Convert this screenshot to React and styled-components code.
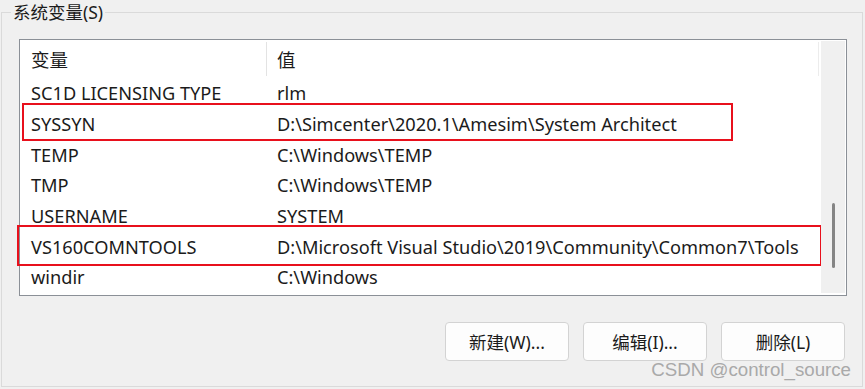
import React from "react";
import styled, { createGlobalStyle } from "styled-components";

const Global = createGlobalStyle`
  html, body { margin: 0; padding: 0; background: #f0f0f0; }
  body { width: 865px; height: 389px; overflow: hidden; }
  #root { width: 865px; height: 389px; }
`;

const FONT = `"Noto Sans", "Noto Sans CJK SC", sans-serif`;

const Page = styled.div`
  position: relative;
  width: 865px;
  height: 389px;
  box-sizing: border-box;
  padding: 2px 2px 2px 1px;
  background: #f0f0f0;
  font-family: ${FONT};
  color: #1b1b1b;
`;

const Group = styled.fieldset`
  margin: 0;
  box-sizing: border-box;
  height: 385px;
  border: 1px solid #dadada;
  padding: 0 16px 0 17px;
  display: flex;
  flex-direction: column;
  min-width: 0;
`;

const Legend = styled.legend`
  margin-left: -8px;
  padding: 0 2px;
  font-size: 17.5px;
  line-height: 20px;
  color: #1b1b1b;
`;

const ListBox = styled.div`
  margin-top: 17px;
  width: 828px;
  height: 257px;
  box-sizing: border-box;
  border: 1px solid #8b9097;
  background: #fff;
  display: flex;
  position: relative;
`;

const ListBody = styled.div`
  flex: 1;
  display: flex;
  flex-direction: column;
  padding-left: 1px;
`;

const Header = styled.div`
  height: 38px;
  display: grid;
  grid-template-columns: 246px 1fr;
  align-items: center;
  font-size: 18.5px;
`;

const HeadCell = styled.div`
  height: 34px;
  display: flex;
  align-items: center;
  padding-left: 10px;
  border-right: 1px solid ${(p) => (p.$end ? "#ececec" : "#e3e3e3")};
  margin-right: ${(p) => (p.$end ? "2px" : "0")};
`;

const Row = styled.div`
  position: relative;
  height: 30.67px;
  display: grid;
  grid-template-columns: 246px 1fr;
  align-items: center;
  font-size: 18.2px;
  line-height: 22px;
  white-space: nowrap;
`;

const Cell = styled.div`
  padding-left: 10px;
`;

const Mark = styled.div`
  position: absolute;
  left: ${(p) => p.$left}px;
  top: ${(p) => p.$top}px;
  width: ${(p) => p.$w}px;
  height: ${(p) => p.$h}px;
  box-sizing: border-box;
  border: 2.5px solid #e8101c;
  pointer-events: none;
`;

const ScrollBar = styled.div`
  width: 24px;
  background: #f0f0f0;
  margin: 1px 1px 2px 0;
  position: relative;
  display: flex;
  flex-direction: column;
  align-items: center;
`;

const Thumb = styled.div`
  margin-top: 162px;
  width: 3px;
  height: 65px;
  border-radius: 2px;
  background: #858585;
`;

const Buttons = styled.div`
  display: flex;
  justify-content: flex-end;
  gap: 14px;
  margin-top: 26px;
  padding-right: 1px;
`;

const Button = styled.button`
  width: 124px;
  height: 39px;
  box-sizing: border-box;
  border: 1px solid #d3d3d3;
  border-radius: 4px;
  background: #fdfdfd;
  font-family: ${FONT};
  font-size: 17.5px;
  color: #1b1b1b;
  padding: 0;
`;

const Watermark = styled.div`
  position: absolute;
  right: 14px;
  bottom: 8px;
  font-family: "Liberation Sans", Arial, sans-serif;
  font-size: 18.7px;
  color: #a9a9a9;
`;

const rows = [
  ["SC1D LICENSING TYPE", "rlm"],
  ["SYSSYN", "D:\\Simcenter\\2020.1\\Amesim\\System Architect", { left: 1, top: -6, w: 711, h: 38 }],
  ["TEMP", "C:\\Windows\\TEMP"],
  ["TMP", "C:\\Windows\\TEMP"],
  ["USERNAME", "SYSTEM"],
  ["VS160COMNTOOLS", "D:\\Microsoft Visual Studio\\2019\\Community\\Common7\\Tools", { left: -4, top: -6, w: 805, h: 41 }],
  ["windir", "C:\\Windows"],
];

export default function App() {
  return (
    <>
      <Global />
      <Page>
        <Group>
          <Legend>系统变量(S)</Legend>
          <ListBox>
            <ListBody>
              <Header>
                <HeadCell>变量</HeadCell>
                <HeadCell $end>值</HeadCell>
              </Header>
              {rows.map(([name, value, mark]) => (
                <Row key={name}>
                  <Cell>{name}</Cell>
                  <Cell>{value}</Cell>
                  {mark && <Mark $left={mark.left} $top={mark.top} $w={mark.w} $h={mark.h} />}
                </Row>
              ))}
            </ListBody>
            <ScrollBar>
              <Thumb />
            </ScrollBar>
          </ListBox>
          <Buttons>
            <Button>新建(W)...</Button>
            <Button>编辑(I)...</Button>
            <Button>删除(L)</Button>
          </Buttons>
        </Group>
        <Watermark>CSDN @control_source</Watermark>
      </Page>
    </>
  );
}
